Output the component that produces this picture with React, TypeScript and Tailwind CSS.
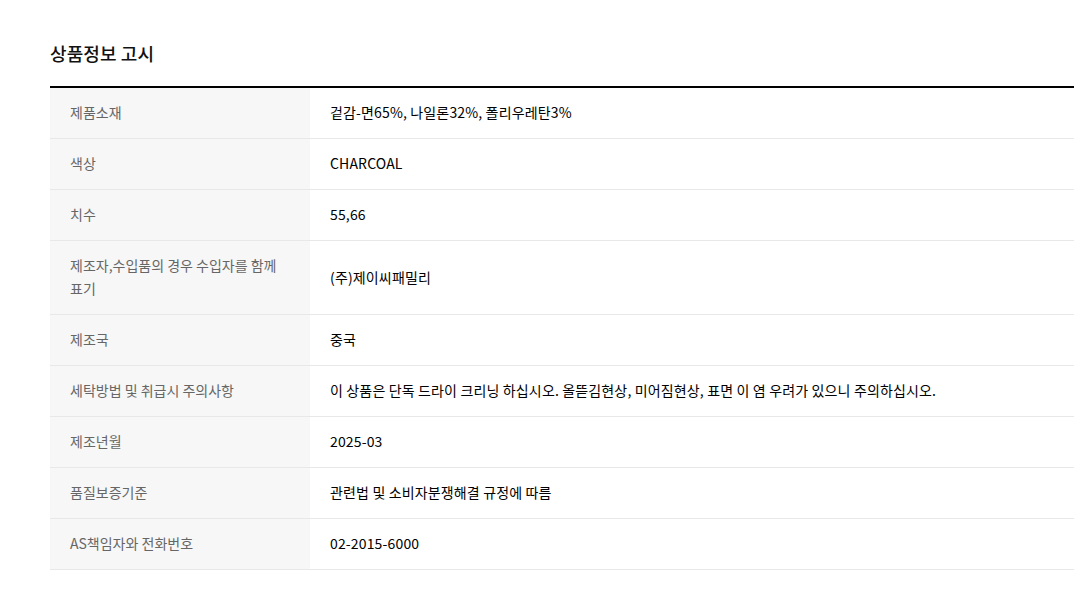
import React from "react";

const rows: { label: string; value: string }[] = [
  { label: "제품소재", value: "겉감-면65%, 나일론32%, 폴리우레탄3%" },
  { label: "색상", value: "CHARCOAL" },
  { label: "치수", value: "55,66" },
  { label: "제조자,수입품의 경우 수입자를 함께 표기", value: "(주)제이씨패밀리" },
  { label: "제조국", value: "중국" },
  {
    label: "세탁방법 및 취급시 주의사항",
    value: "이 상품은 단독 드라이 크리닝 하십시오. 올뜯김현상, 미어짐현상, 표면 이 염 우려가 있으니 주의하십시오.",
  },
  { label: "제조년월", value: "2025-03" },
  { label: "품질보증기준", value: "관련법 및 소비자분쟁해결 규정에 따름" },
  { label: "AS책임자와 전화번호", value: "02-2015-6000" },
];

export default function App() {
  return (
    <div className="min-h-screen bg-white font-['Noto_Sans_CJK_KR','Noto_Sans',sans-serif]">
      <div className="ml-[50px] w-[1024px] pt-[40px]">
        <h2 className="text-[18px] leading-[26px] font-medium text-[#111] tracking-[0.1px] mb-[20px]">상품정보 고시</h2>
        <div className="border-t-2 border-black">
          {rows.map((row) => (
            <div key={row.label} className="flex border-b border-[#e8e8e8] text-[14px] leading-[23px]">
              <div className="w-[260px] shrink-0 bg-[#f7f7f7] px-[20px] pt-[13px] pb-[14px] text-[#666]">
                {row.label}
              </div>
              <div className="flex-1 flex items-center px-[20px] pt-[13px] pb-[14px] text-black tracking-[0.15px]">
                {row.value}
              </div>
            </div>
          ))}
        </div>
      </div>
    </div>
  );
}
